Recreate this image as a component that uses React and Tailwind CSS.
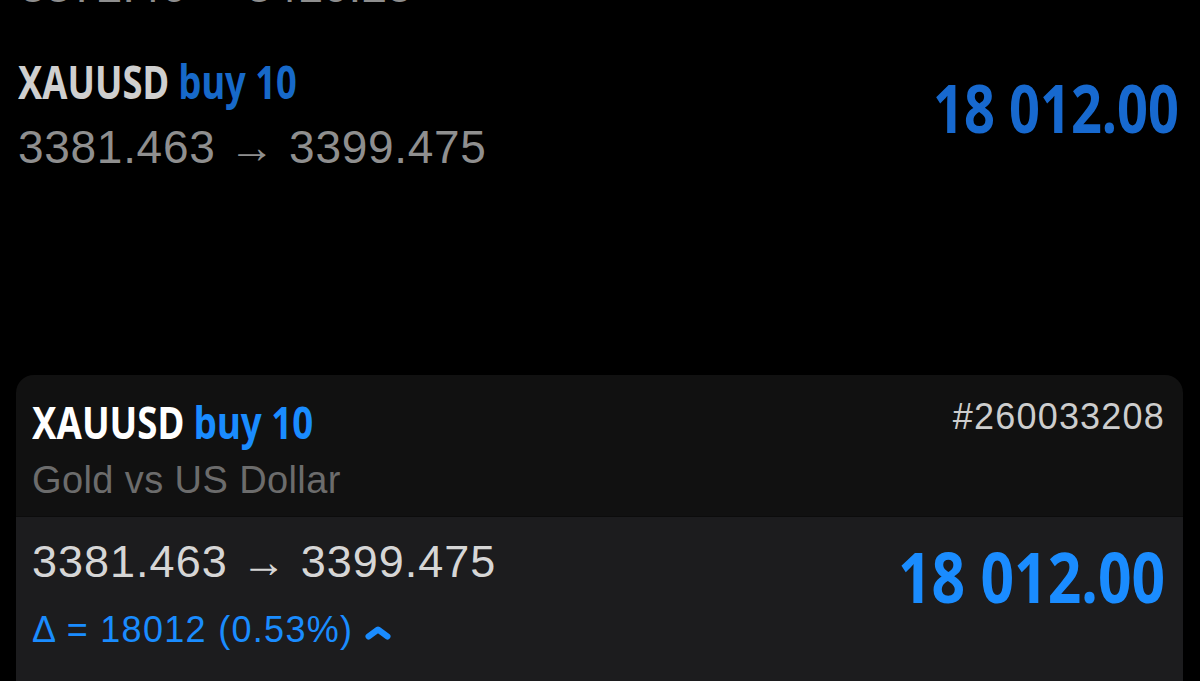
import React from "react";

const sans = { fontFamily: '"Liberation Sans", Arial, Helvetica, sans-serif' };
const narrow = { fontFamily: '"Noto Sans", "Open Sans", "Liberation Sans", sans-serif' };

function Title({ size, scale, symbolColor, buyColor }) {
  return (
    <div className={`inline-block origin-left font-bold leading-none whitespace-nowrap ${size} ${scale}`} style={narrow}>
      <span className={symbolColor}>XAUUSD</span>{" "}
      <span className={buyColor}>buy 10</span>
    </div>
  );
}

function BigNumber({ size, scale, color }) {
  return (
    <div className={`inline-block origin-right font-bold leading-none whitespace-nowrap ${size} ${scale} ${color}`} style={narrow}>
      18 012.00
    </div>
  );
}

function ChevronUp() {
  return (
    <svg width="26" height="14" viewBox="0 0 26 14" className="inline-block ml-[12px] mb-[8px]">
      <path d="M3.5 10.5 L13 3.5 L22.5 10.5" fill="none" stroke="#1a8cff" strokeWidth="6" strokeLinecap="round" strokeLinejoin="round" />
    </svg>
  );
}

export default function App() {
  return (
    <div className="w-full h-[681px] bg-black overflow-hidden flex flex-col" style={sans}>
      {/* partially visible line at the very top */}
      <div className="-mt-[37px] h-[46px] pl-[20px] text-[46px] leading-none text-[#8e8e8e] whitespace-nowrap flex gap-[60px]">
        <span>3372.46</span>
        <span>3410.25</span>
      </div>

      {/* top position summary */}
      <div className="mt-[49px] pl-[18px] pr-[21px] flex justify-between items-start">
        <div className="flex flex-col items-start">
          <Title size="text-[46px]" scale="scale-x-[0.79]" symbolColor="text-[#cfcfcf]" buyColor="text-[#1769c9]" />
          <div className="mt-[20px] text-[46px] leading-none tracking-[0.7px] text-[#8f8f8f] whitespace-nowrap">
            3381.463 → 3399.475
          </div>
        </div>
        <div className="mt-[16px]">
          <BigNumber size="text-[66px]" scale="scale-x-[0.82]" color="text-[#1769cf]" />
        </div>
      </div>

      {/* card */}
      <div className="mt-[205px] ml-[16px] mr-[17px] rounded-t-[18px] overflow-hidden flex flex-col">
        <div className="bg-[#111111] pt-[24px] pb-[17px] pl-[16px] pr-[18px]">
          <div className="flex justify-between items-start">
            <Title size="text-[45px]" scale="scale-x-[0.814]" symbolColor="text-white" buyColor="text-[#1a8cff]" />
            <div className="mt-[0px] text-[36px] leading-none tracking-[1.2px] text-[#cdcdcd] whitespace-nowrap">
              #260033208
            </div>
          </div>
          <div className="mt-[17px] text-[38px] leading-none tracking-[0.4px] text-[#6c6c6c] whitespace-nowrap">
            Gold vs US Dollar
          </div>
        </div>
        <div className="bg-[#1c1c1e] border-t border-[#0c0c0c] pt-[22px] pb-[40px] pl-[16px] pr-[18px] flex justify-between items-start">
          <div className="flex flex-col">
            <div className="text-[45px] leading-none tracking-[1px] text-[#d6d6d6] whitespace-nowrap">
              3381.463 → 3399.475
            </div>
            <div className="mt-[28px] text-[36px] leading-none tracking-[1.3px] text-[#1a8cff] whitespace-nowrap flex items-end">
              <span>Δ = 18012 (0.53%)</span>
              <ChevronUp />
            </div>
          </div>
          <div className="mt-[2px]">
            <BigNumber size="text-[70px]" scale="scale-x-[0.84]" color="text-[#1a8cff]" />
          </div>
        </div>
      </div>
    </div>
  );
}
